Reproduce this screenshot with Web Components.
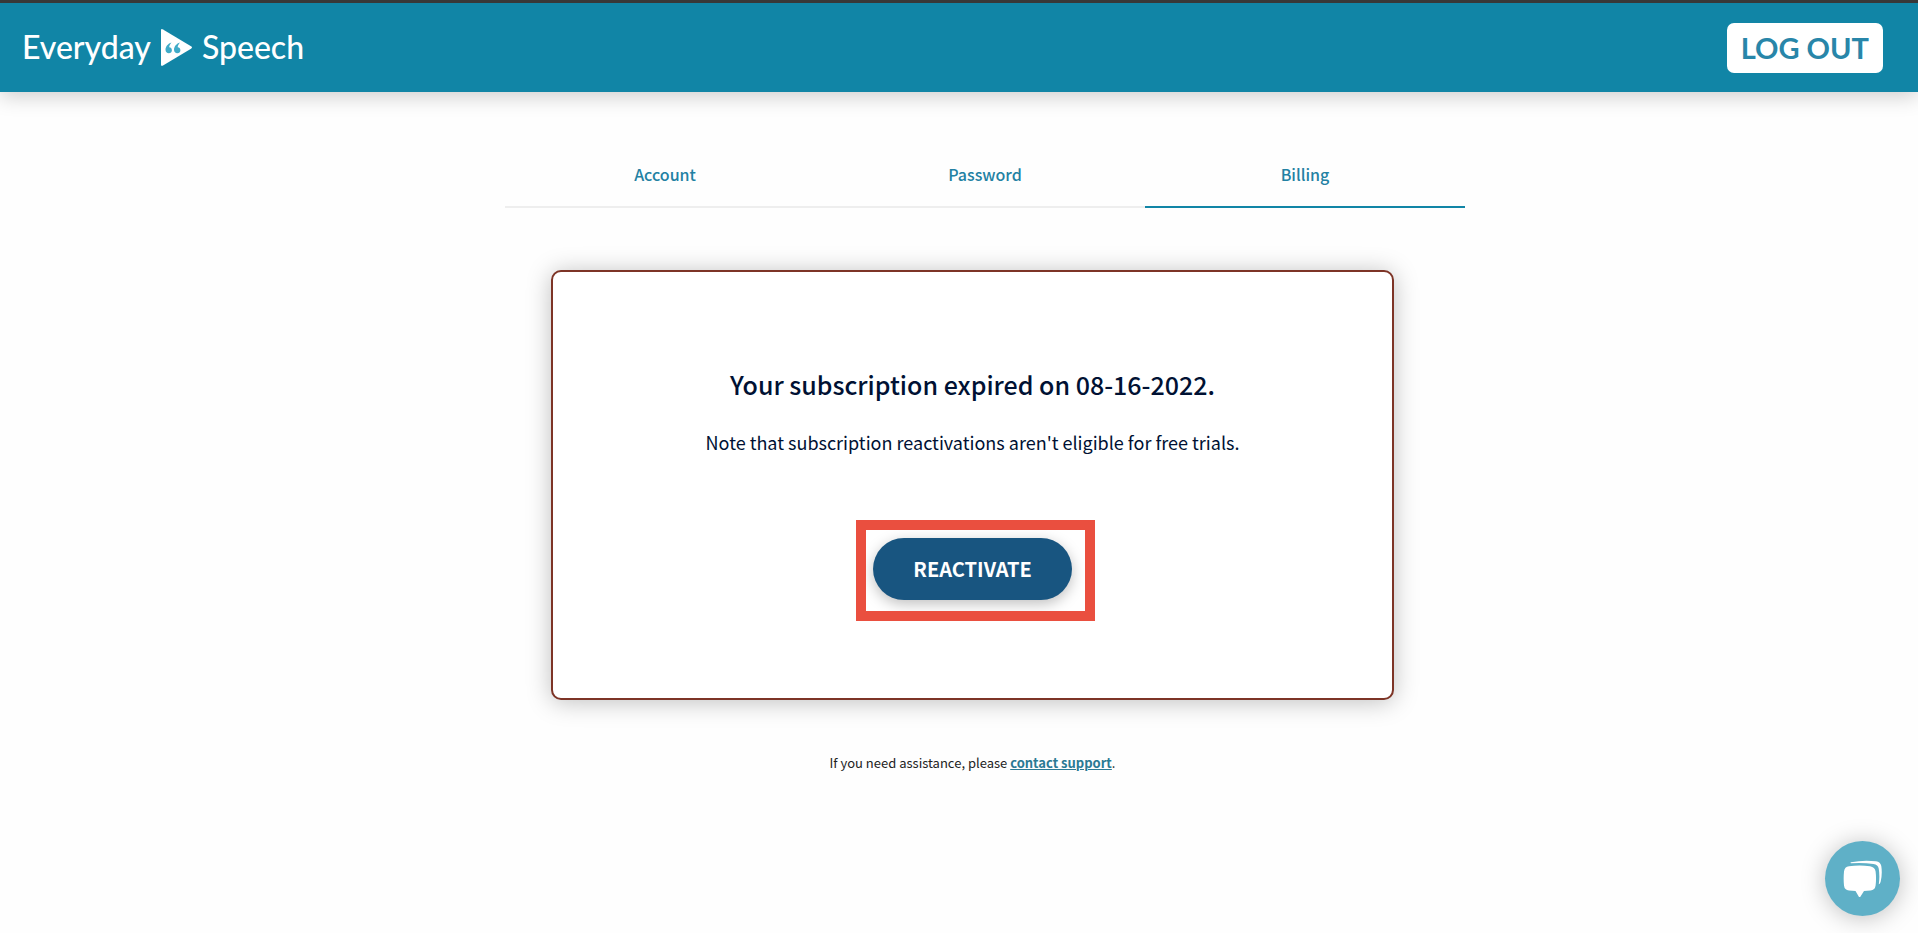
<!DOCTYPE html>
<html lang="en">
<head>
<meta charset="utf-8">
<meta name="viewport" content="width=device-width, initial-scale=1">
<title>Everyday Speech - Billing</title>
<style>
  body {
    margin: 0;
    min-height: 100vh;
    background-color: #fefefe;
    color: #001133;
    font-family: "Noto Sans CJK SC", "Open Sans", sans-serif;
    --teal: #1185a6;
  }
</style>
</head>
<body>
<billing-page></billing-page>

<template id="site-header-template">
  <style>
    :host {
      display: block;
      background-color: var(--teal);
      border-top: 3px solid #383838;
      box-shadow: 0 4px 20px rgba(0, 0, 0, 0.2);
    }

    header {
      display: flex;
      justify-content: space-between;
      align-items: center;
      padding: 20px 35px 19px 22px;
    }

    .logo {
      display: flex;
      align-items: center;
      gap: 9px;
      padding-bottom: 2px;
      color: white;
      text-decoration: none;
      font: 500 32px/40px Lato, sans-serif;
    }

    .logo svg {
      width: 33px;
      height: 39px;
    }

    button {
      padding: 0 14px;
      border: none;
      border-radius: 7px;
      background-color: white;
      color: #2886a9;
      font: 700 29px/50px Lato, sans-serif;
      cursor: pointer;
    }
  </style>
  <header>
    <a class="logo" href="#">
      <span>Everyday</span>
      <svg viewBox="0 0 33 39" aria-hidden="true">
        <path fill="white" d="M1 2.500Q1 .4 3 1.500L31 18.300Q33 19.500 31 20.700L3 37.500Q1 38.600 1 36.500Z"/>
        <path fill="#3fabc8" d="M11.500 14.500C8 15.500 5.500 18.500 5.500 21.800C5.500 24 7 25.200 8.800 25.200C10.600 25.200 11.900 23.900 11.900 22.200C11.900 20.500 10.700 19.300 9.200 19.300C9.300 17.600 10 16.200 11.500 14.500Z"/>
        <path fill="#3fabc8" transform="translate(8.500 0)" d="M11.500 14.500C8 15.500 5.500 18.500 5.500 21.800C5.500 24 7 25.200 8.800 25.200C10.600 25.200 11.900 23.900 11.900 22.200C11.900 20.500 10.700 19.300 9.200 19.300C9.300 17.600 10 16.200 11.500 14.500Z"/>
      </svg>
      <span>Speech</span>
    </a>
    <button type="button">LOG OUT</button>
  </header>
</template>

<template id="account-tabs-template">
  <style>
    :host {
      display: block;
    }

    nav {
      display: flex;
    }

    ::slotted(a) {
      flex: 1;
      padding: 18px 0;
      border-bottom: 2px solid #eeeeee;
      color: #2381a3;
      font-size: 16px;
      font-weight: 500;
      line-height: 28px;
      text-align: center;
      text-decoration: none;
    }

    ::slotted(a[aria-current]) {
      border-bottom-color: var(--teal);
    }
  </style>
  <nav><slot></slot></nav>
</template>

<template id="subscription-card-template">
  <style>
    :host {
      display: block;
      box-sizing: border-box;
      padding: 92px 24px 98px;
      border: 2px solid #7d3426;
      border-radius: 10px;
      background-color: white;
      box-shadow: 0 2px 24px rgba(0, 0, 0, 0.25);
      text-align: center;
    }

    h1 {
      margin: 0 0 22px;
      font-size: 25px;
      font-weight: 500;
      line-height: 40px;
    }

    p {
      margin: 0 0 80px;
      font-size: 18px;
      font-weight: 400;
      line-height: 32px;
    }
  </style>
  <h1><slot name="title"></slot></h1>
  <p><slot name="note"></slot></p>
  <slot></slot>
</template>

<template id="action-button-template">
  <style>
    :host {
      display: inline-block;
      position: relative;
    }

    /* callout frame drawn around the button */
    :host([highlighted])::after {
      content: "";
      position: absolute;
      inset: -18px -23px -21px -17px;
      border: 10px solid #ea4f3f;
      pointer-events: none;
    }

    button {
      display: block;
      padding: 0 40px;
      border: none;
      border-radius: 31px;
      background-color: #185580;
      box-shadow: 0 4px 14px rgba(0, 0, 0, 0.25);
      color: white;
      font: inherit;
      font-size: 20px;
      font-weight: 700;
      line-height: 62px;
      cursor: pointer;
    }
  </style>
  <button type="button"><slot></slot></button>
</template>

<template id="chat-launcher-template">
  <style>
    :host {
      position: fixed;
      right: 18px;
      bottom: 17px;
    }

    button {
      display: flex;
      align-items: center;
      justify-content: center;
      width: 75px;
      height: 75px;
      padding: 0;
      border: none;
      border-radius: 50%;
      background-color: #5fb0c7;
      box-shadow: 0 2px 24px rgba(0, 0, 0, 0.25);
      cursor: pointer;
    }

    svg {
      width: 39px;
      height: 37px;
    }
  </style>
  <button type="button" aria-label="Open chat">
    <svg viewBox="0 0 39 37" fill="white" aria-hidden="true">
      <path d="M6 6.200Q16.500 4.800 27 6.200Q32 7 32.600 11.500Q33.500 18.500 32.600 25.500Q32 30 27.500 30.500L21 31L17.200 37Q16.600 37.600 16 37L12.500 31L6 30.500Q1.500 30 1 25.500Q.3 18.500 1 11.500Q1.500 6.800 6 6.200Z"/>
      <path d="M8 2.200Q20 -.300 33 1.200Q37.500 1.700 38.300 6Q39.500 14 37.700 21.500Q37.200 24 35.800 24.200Q37 16 35.700 8.500Q35 4.500 30.500 3.900Q20 2.400 8 3.200Q7 2.600 8 2.200Z"/>
    </svg>
  </button>
</template>

<template id="billing-page-template">
  <style>
    :host {
      display: block;
    }

    main {
      display: flex;
      flex-direction: column;
      align-items: center;
      padding: 50px 0 50px 27px;
    }

    account-tabs {
      width: 100%;
      max-width: 960px;
      margin-left: 25px;
    }

    subscription-card {
      width: 100%;
      max-width: 843px;
      margin-top: 62px;
    }

    .help {
      margin: 50px 0 0;
      color: #222222;
      font-size: 13px;
      line-height: 26px;
    }

    .help a {
      color: #2b7a94;
      font-weight: 700;
    }
  </style>
  <site-header></site-header>
  <main>
    <account-tabs>
      <a href="#account">Account</a>
      <a href="#password">Password</a>
      <a href="#billing" aria-current="page">Billing</a>
    </account-tabs>
    <subscription-card>
      <span slot="title">Your subscription expired on 08-16-2022.</span>
      <span slot="note">Note that subscription reactivations aren't eligible for free trials.</span>
      <action-button highlighted>REACTIVATE</action-button>
    </subscription-card>
    <p class="help">If you need assistance, please <a href="#support">contact support</a>.</p>
  </main>
  <chat-launcher></chat-launcher>
</template>

<script>
class TemplateElement extends HTMLElement {
    constructor() {
        super();
        const template = document.getElementById(`${this.localName}-template`);
        this.attachShadow({ mode: "open" });
        this.shadowRoot.append(template.content.cloneNode(true));
    }
}

class SiteHeader extends TemplateElement {}
class AccountTabs extends TemplateElement {}
class SubscriptionCard extends TemplateElement {}
class ActionButton extends TemplateElement {}
class ChatLauncher extends TemplateElement {}
class BillingPage extends TemplateElement {}

customElements.define("site-header", SiteHeader);
customElements.define("account-tabs", AccountTabs);
customElements.define("subscription-card", SubscriptionCard);
customElements.define("action-button", ActionButton);
customElements.define("chat-launcher", ChatLauncher);
customElements.define("billing-page", BillingPage);
</script>
</body>
</html>
